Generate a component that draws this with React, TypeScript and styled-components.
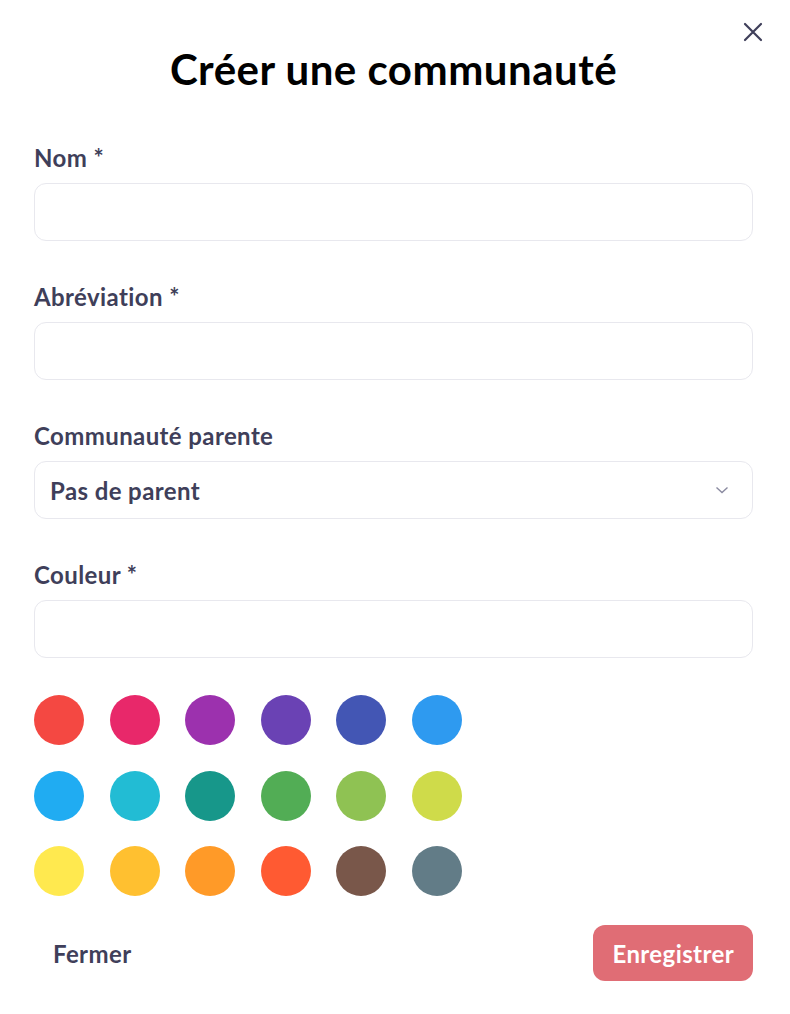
import React, { useState } from 'react'
import styled, { createGlobalStyle } from 'styled-components'

const GlobalStyle = createGlobalStyle`
  * { box-sizing: border-box; }
  body {
    margin: 0;
    background: #ffffff;
    font-family: Lato, "Noto Sans", sans-serif;
  }
`

const COLORS = [
  '#f44842', '#e8286a', '#9c31ae', '#6a42b4', '#4356b4', '#2e9af0',
  '#20acf2', '#22bcd4', '#17978a', '#52ad55', '#8fc253', '#cfdb4a',
  '#ffe94f', '#ffc030', '#ff9a28', '#ff5a32', '#79574a', '#627c87',
]

const Dialog = styled.div`
  position: relative;
  width: 790px;
  min-height: 1014px;
  padding: 45px 37px 0 34px;
  background: #ffffff;
`

const CloseButton = styled.button`
  position: absolute;
  top: 19px;
  right: 24px;
  width: 26px;
  height: 26px;
  padding: 0;
  border: none;
  background: transparent;
  cursor: pointer;
  display: flex;
  align-items: center;
  justify-content: center;
`

const Title = styled.h1`
  margin: 0 0 50px;
  font-size: 42px;
  line-height: 48px;
  font-weight: 700;
  letter-spacing: 0.5px;
  color: #000000;
  text-align: center;
`

const Field = styled.div`
  display: flex;
  flex-direction: column;
  gap: 11px;
  margin-bottom: 41px;
`

const Label = styled.label`
  font-size: 24px;
  line-height: 29px;
  font-weight: 700;
  letter-spacing: 0.4px;
  color: #3f3f5a;
`

const Input = styled.input`
  height: 58px;
  width: 100%;
  border: 1px solid #e8e8ee;
  border-radius: 12px;
  padding: 0 15px;
  font-family: inherit;
  font-size: 24px;
  font-weight: 700;
  color: #3f3f5a;
  outline: none;
`

const Select = styled.div`
  height: 58px;
  border: 1px solid #e8e8ee;
  border-radius: 12px;
  padding: 0 23px 0 15px;
  display: flex;
  align-items: center;
  justify-content: space-between;
  font-size: 24px;
  font-weight: 700;
  letter-spacing: 0.4px;
  color: #3f3f5a;
  cursor: pointer;
`

const Swatches = styled.div`
  display: grid;
  grid-template-columns: repeat(6, 50px);
  column-gap: 25.5px;
  row-gap: 25.5px;
  margin-top: -4px;
`

const Swatch = styled.button<{ $color: string; $active: boolean }>`
  width: 50px;
  height: 50px;
  padding: 0;
  border-radius: 50%;
  border: none;
  background: ${({ $color }) => $color};
  cursor: pointer;
  outline: ${({ $active }) => ($active ? '3px solid #3f3f5a' : 'none')};
  outline-offset: 2px;
`

const Footer = styled.div`
  display: flex;
  justify-content: space-between;
  align-items: center;
  margin-top: 29px;
`

const TextButton = styled.button`
  height: 56px;
  padding: 0 19px;
  border: none;
  background: transparent;
  font-family: inherit;
  font-size: 24px;
  font-weight: 700;
  letter-spacing: 0.4px;
  color: #3f3f5a;
  cursor: pointer;
`

const PrimaryButton = styled.button`
  height: 56px;
  padding: 0 19px;
  border: none;
  border-radius: 12px;
  background: #e06d75;
  font-family: inherit;
  font-size: 24px;
  font-weight: 700;
  letter-spacing: 0.4px;
  color: #ffffff;
  cursor: pointer;
`

export default function App() {
  const [color, setColor] = useState<string | null>(null)

  return (
    <>
      <GlobalStyle />
      <Dialog>
        <CloseButton aria-label="Fermer">
          <svg width="20" height="20" viewBox="0 0 20 20">
            <path d="M2 2 L18 18 M18 2 L2 18" stroke="#3f3f5a" strokeWidth="2.2" strokeLinecap="round" />
          </svg>
        </CloseButton>
        <Title>Créer une communauté</Title>

        <Field>
          <Label>Nom *</Label>
          <Input />
        </Field>

        <Field>
          <Label>Abréviation *</Label>
          <Input />
        </Field>

        <Field>
          <Label>Communauté parente</Label>
          <Select>
            <span>Pas de parent</span>
            <svg width="14" height="8" viewBox="0 0 14 8">
              <path d="M1.5 1.5 L7 6.5 L12.5 1.5" fill="none" stroke="#8a8aa0" strokeWidth="1.4" />
            </svg>
          </Select>
        </Field>

        <Field>
          <Label>Couleur *</Label>
          <Input value={color ?? ''} readOnly />
        </Field>

        <Swatches>
          {COLORS.map((c) => (
            <Swatch key={c} $color={c} $active={color === c} onClick={() => setColor(c)} />
          ))}
        </Swatches>

        <Footer>
          <TextButton>Fermer</TextButton>
          <PrimaryButton>Enregistrer</PrimaryButton>
        </Footer>
      </Dialog>
    </>
  )
}
